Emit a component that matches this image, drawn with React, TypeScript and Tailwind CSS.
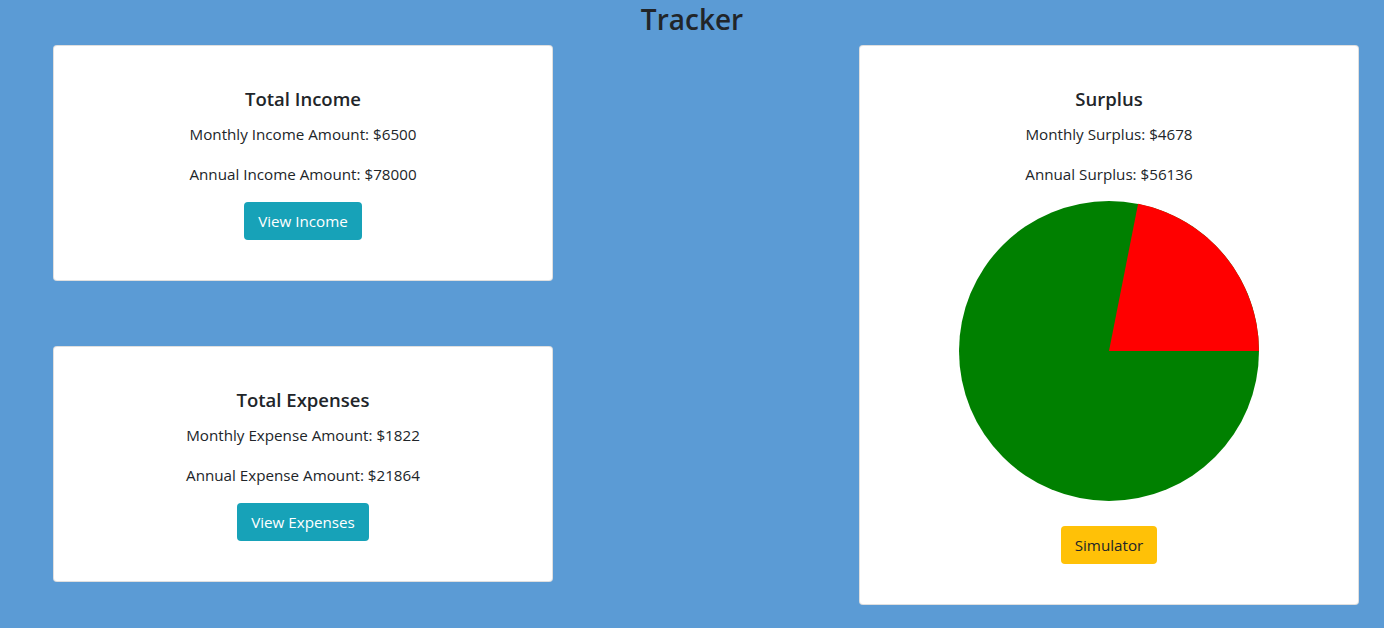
import React from "react";

const font = { fontFamily: '"Open Sans", "Noto Sans", sans-serif' };

function Card({
  title,
  lines,
  children,
}: {
  title: string;
  lines: string[];
  children: React.ReactNode;
}) {
  return (
    <div className="w-[500px] bg-white border border-[rgba(0,0,0,0.125)] rounded-[4px] pt-[41px] pb-[40px] flex flex-col items-center text-[#212529]">
      <h5 className="text-[18.5px] leading-[24px] font-semibold mb-[11px]">{title}</h5>
      {lines.map((l) => (
        <p key={l} className="text-[15.2px] leading-[24px] mb-[16px]">
          {l}
        </p>
      ))}
      {children}
    </div>
  );
}

function Pie() {
  const cx = 150,
    cy = 150,
    r = 150;
  const frac = 1822 / (1822 + 6500);
  const a = frac * 2 * Math.PI;
  const x = cx + r * Math.cos(a);
  const y = cy - r * Math.sin(a);
  return (
    <svg width="300" height="300" viewBox="0 0 300 300">
      <circle cx={cx} cy={cy} r={r} fill="#008000" />
      <path d={`M${cx},${cy} L${cx + r},${cy} A${r},${r} 0 0 0 ${x},${y} Z`} fill="#ff0000" />
    </svg>
  );
}

export default function App() {
  return (
    <div className="w-[1384px] h-[628px] bg-[#5b9bd5] overflow-hidden" style={font}>
      <h2 className="text-center text-[28px] leading-[38px] font-semibold text-[#212529] mb-[7px]">Tracker</h2>
      <div className="flex pl-[53px] gap-[306px] items-start">
        <div className="flex flex-col gap-[65px]">
          <Card title="Total Income" lines={["Monthly Income Amount: $6500", "Annual Income Amount: $78000"]}>
            <button className="h-[38px] px-[14px] rounded-[4px] bg-[#17a2b8] text-white text-[15.2px]">View Income</button>
          </Card>
          <Card title="Total Expenses" lines={["Monthly Expense Amount: $1822", "Annual Expense Amount: $21864"]}>
            <button className="h-[38px] px-[14px] rounded-[4px] bg-[#17a2b8] text-white text-[15.2px]">View Expenses</button>
          </Card>
        </div>
        <Card title="Surplus" lines={["Monthly Surplus: $4678", "Annual Surplus: $56136"]}>
          <div className="-mt-[1px] mb-[25px]">
            <Pie />
          </div>
          <button className="h-[38px] px-[14px] rounded-[4px] bg-[#ffc107] text-[#212529] text-[15.2px]">Simulator</button>
        </Card>
      </div>
    </div>
  );
}
